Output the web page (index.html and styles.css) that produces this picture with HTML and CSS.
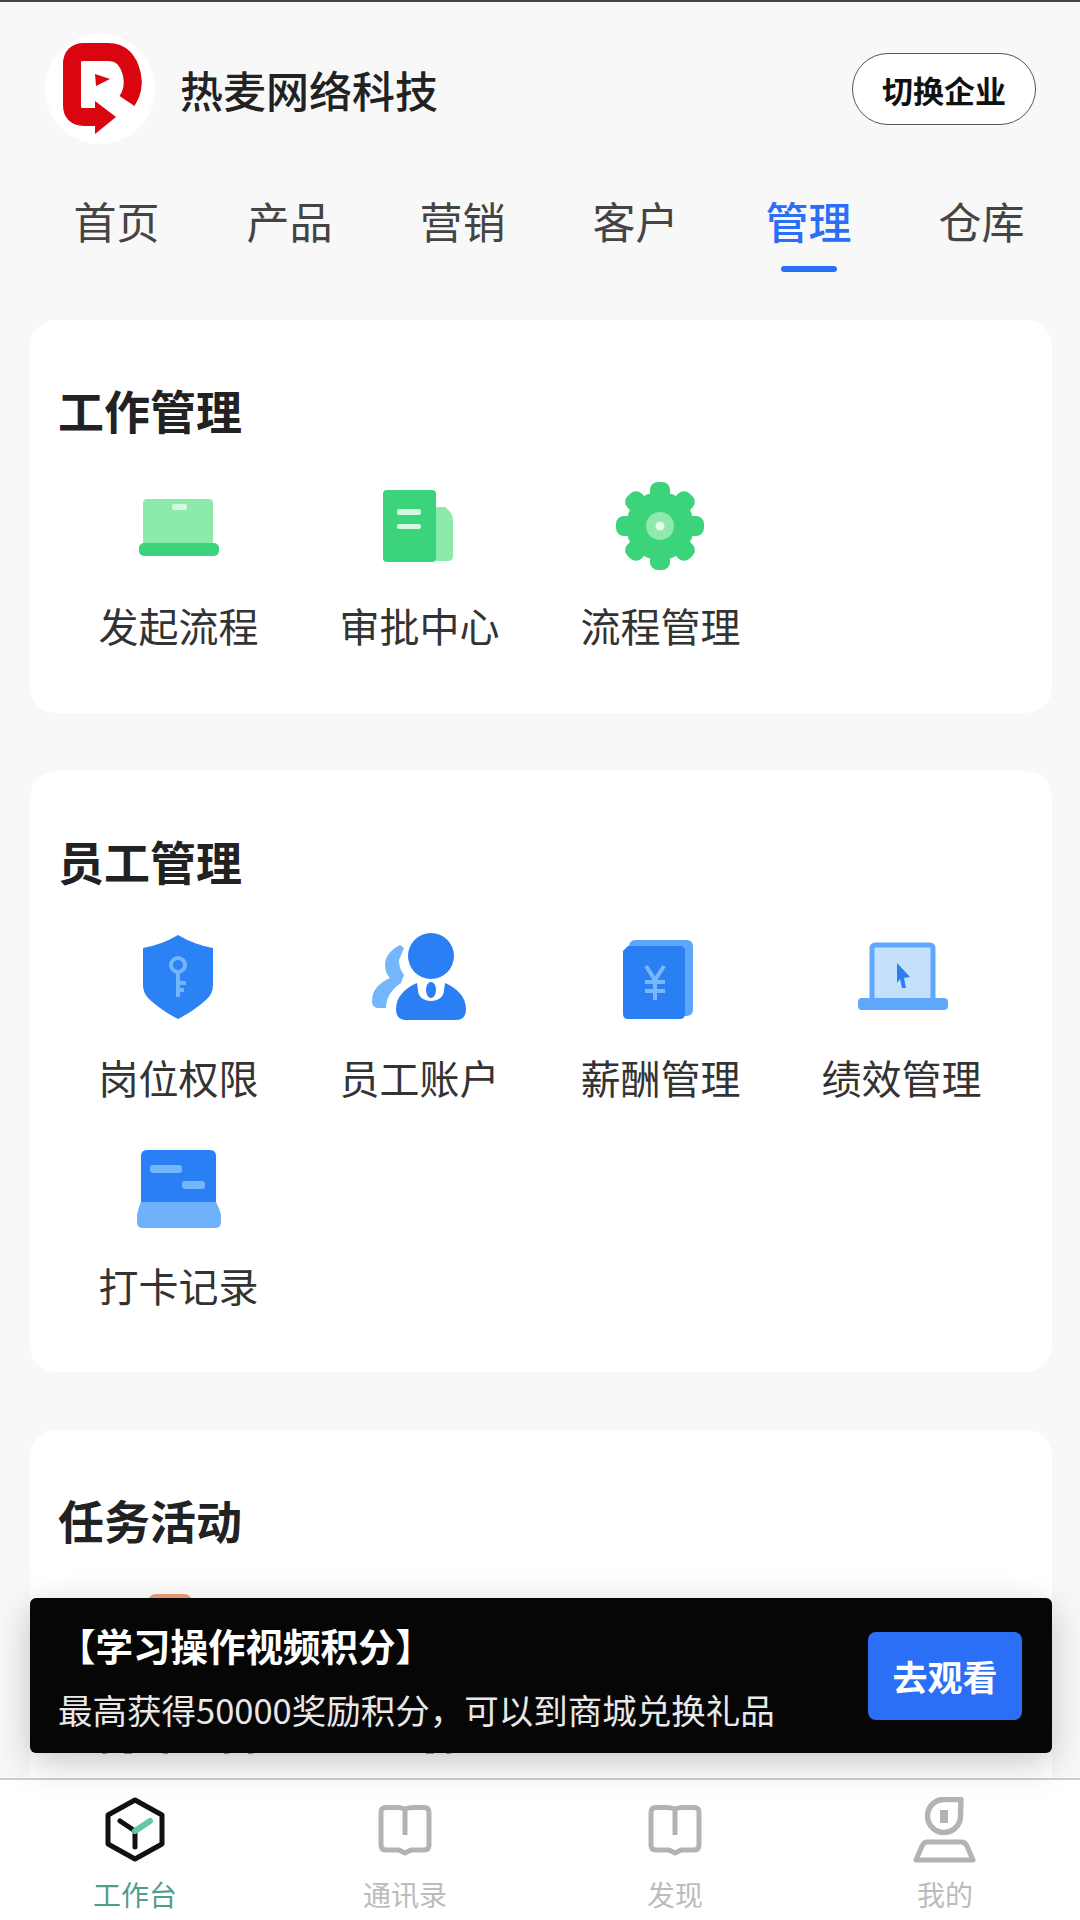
FILE: index.html
```html
<!DOCTYPE html>
<html lang="zh-CN">
<head>
  <meta charset="UTF-8" />
  <meta name="viewport" content="width=device-width, initial-scale=1.0"/>
  <title>热麦网络科技 - 管理</title>
  <link rel="stylesheet" href="styles.css">
</head>
<body>
  <header class="top-bar">
    <div class="logo">
      <svg viewBox="15 15 110 110" width="110" height="110">
        <circle cx="70" cy="70" r="55" fill="#fff"/>
        <path d="M97 82 Q105 70 102 56 Q97 33 78 33 L54 33 Q42 33 42 45 L42 86 Q42 98 54 98 L72 98" fill="none" stroke="#d9060f" stroke-width="18" stroke-linejoin="round"/>
        <polygon points="65,82 86,98 65,115" fill="#d9060f"/>
        <polygon points="65,55 80,60 66,67" fill="#d9060f"/>
      </svg>
    </div>
    <div class="company">热麦网络科技</div>
    <button class="switch-btn">切换企业</button>
  </header>

  <nav class="tabs">
    <div class="tab">首页</div>
    <div class="tab">产品</div>
    <div class="tab">营销</div>
    <div class="tab">客户</div>
    <div class="tab active">管理</div>
    <div class="tab">仓库</div>
  </nav>

  <main class="content">
    <section class="card">
      <h2>工作管理</h2>
      <div class="grid">
        <div class="item">
          <svg class="icon" viewBox="0 0 100 90">
            <rect x="14" y="19" width="70" height="46" rx="4" fill="#8ceaaa"/>
            <rect x="10" y="63" width="80" height="13" rx="5" fill="#3bd47a"/>
            <rect x="43" y="24" width="15" height="6" rx="2" fill="#d6f8e2"/>
          </svg>
          <span>发起流程</span>
        </div>
        <div class="item">
          <svg class="icon" viewBox="0 0 100 90">
            <path d="M66 27 L75 27 Q83 33 83 40 L83 76 Q83 81 78 81 L66 81 Z" fill="#8ceaaa"/>
            <rect x="13" y="10" width="53" height="72" rx="4" fill="#3bd47a"/>
            <rect x="27" y="29" width="24" height="6" rx="2" fill="#d6f8e2"/>
            <rect x="27" y="44" width="24" height="5" rx="2" fill="#d6f8e2"/>
          </svg>
          <span>审批中心</span>
        </div>
        <div class="item">
          <svg class="icon" viewBox="0 0 100 90">
            <g transform="translate(49 46)" fill="#3bd47a">
              <circle r="34"/>
              <rect x="-10" y="-44" width="20" height="24" rx="8"/>
              <rect x="-10" y="-44" width="20" height="24" rx="8" transform="rotate(45)"/>
              <rect x="-10" y="-44" width="20" height="24" rx="8" transform="rotate(90)"/>
              <rect x="-10" y="-44" width="20" height="24" rx="8" transform="rotate(135)"/>
              <rect x="-10" y="-44" width="20" height="24" rx="8" transform="rotate(180)"/>
              <rect x="-10" y="-44" width="20" height="24" rx="8" transform="rotate(225)"/>
              <rect x="-10" y="-44" width="20" height="24" rx="8" transform="rotate(270)"/>
              <rect x="-10" y="-44" width="20" height="24" rx="8" transform="rotate(315)"/>
              <circle r="14" fill="#8fe8ae"/>
              <circle r="4.5" fill="#e4fbec"/>
            </g>
          </svg>
          <span>流程管理</span>
        </div>
      </div>
    </section>

    <section class="card card-staff">
      <h2>员工管理</h2>
      <div class="grid">
        <div class="item">
          <svg class="icon" viewBox="0 0 100 90">
            <path d="M49 2 Q66 12 84 15 L84 52 Q84 60 78 66 Q65 78 49 86 Q33 78 20 66 Q14 60 14 52 L14 15 Q32 12 49 2 Z" fill="#2a82f5"/>
            <g fill="none" stroke="#74b6fb" stroke-width="4">
              <circle cx="49" cy="32" r="7"/>
              <path d="M49 39 V64 M49 50 H57 M49 57 H55"/>
            </g>
          </svg>
          <span>岗位权限</span>
        </div>
        <div class="item">
          <svg class="icon" viewBox="0 0 100 90">
            <path d="M30 12 Q15 20 15 32 Q15 40 20 45 Q2 53 2 68 Q2 75 8 75 L16 75 Q16 60 31 50 L34 42 Q29 36 29 27 L34 15 Z" fill="#74b6fb"/>
            <ellipse cx="61" cy="23" rx="23" ry="23" fill="#2a7ff5"/>
            <path d="M47 50 C35 55 26 64 26 76 C26 84 30 87 36 87 L86 87 C92 87 96 84 96 76 C96 64 87 55 75 50 L74 57 C74 64 68 68 61 68 C54 68 48 64 48 57 Z" fill="#2a7ff5"/>
            <ellipse cx="61" cy="57" rx="5" ry="8" fill="#2a7ff5"/>
          </svg>
          <span>员工账户</span>
        </div>
        <div class="item">
          <svg class="icon" viewBox="0 0 100 90">
            <rect x="18" y="7" width="64" height="76" rx="6" fill="#5ea6f9"/>
            <path d="M17 13 L69 13 Q74 13 74 18 L74 81 Q74 86 69 86 L17 86 Q12 86 12 81 L12 18 Z" fill="#2a7ff5"/>
            <path d="M35 33 L44 47 L53 33 M44 47 V67 M34 49 H54 M34 58 H54" fill="none" stroke="#7ab8fb" stroke-width="4"/>
          </svg>
          <span>薪酬管理</span>
        </div>
        <div class="item">
          <svg class="icon" viewBox="0 0 100 90">
            <rect x="20" y="12" width="61" height="56" rx="3" fill="#c5e0fd" stroke="#5fa8fb" stroke-width="5"/>
            <rect x="6" y="65" width="90" height="12" rx="4" fill="#5fa8fb"/>
            <polygon points="45,30 58,44 52,45 54,55 50,55 48,46 45,50" fill="#2a7ff5"/>
          </svg>
          <span>绩效管理</span>
        </div>
        <div class="item">
          <svg class="icon" viewBox="0 0 100 90">
            <path d="M12 61 L12 15 Q12 9 18 9 L81 9 Q87 9 87 15 L87 61 Z" fill="#2a7ff5"/>
            <path d="M12 61 L87 61 Q91 68 92 74 L92 81 Q92 87 86 87 L14 87 Q8 87 8 81 L8 74 Q9 68 12 61 Z" fill="#6db2fb"/>
            <rect x="21" y="24" width="32" height="8" rx="3" fill="#74b6fb"/>
            <rect x="53" y="40" width="23" height="8" rx="3" fill="#74b6fb"/>
          </svg>
          <span>打卡记录</span>
        </div>
      </div>
    </section>

    <section class="card">
      <h2>任务活动</h2>
      <svg class="task-peek" viewBox="0 0 420 170" width="420" height="170">
        <rect x="90" y="4" width="44" height="80" rx="8" fill="#f0a077"/>
        <g fill="#9a9a9a">
          <rect x="44" y="163" width="5" height="1"/>
          <rect x="66" y="163" width="8" height="1"/>
          <rect x="105" y="163" width="5" height="1"/>
          <rect x="166" y="163" width="5" height="1"/>
          <rect x="190" y="163" width="5" height="1"/>
          <rect x="368" y="163" width="8" height="1"/>
          <rect x="388" y="163" width="5" height="1"/>
        </g>
      </svg>
    </section>
  </main>

  <nav class="bottom-nav">
    <div class="nav-item current">
      <svg viewBox="0 0 64 66" width="64" height="66">
        <polygon points="32,3 59,18 59,47 32,62 5,47 5,18" fill="none" stroke="#111" stroke-width="5" stroke-linejoin="round"/>
        <path d="M17 24 L32 34 L32 50" fill="none" stroke="#111" stroke-width="5" stroke-linecap="round" stroke-linejoin="round"/>
        <path d="M32 34 L47 24" fill="none" stroke="#5fcaa5" stroke-width="6" stroke-linecap="round"/>
      </svg>
      <span>工作台</span>
    </div>
    <div class="nav-item">
      <svg viewBox="0 0 64 66" width="64" height="66">
        <path d="M32 12 Q28 10.5 24 10.5 H13 Q8 10.5 8 15.5 V48 Q8 53 13 53 H26 L32 56 L38 53 H51 Q56 53 56 48 V15.5 Q56 10.5 51 10.5 H40 Q36 10.5 32 12 V38" fill="none" stroke="#b3b3b3" stroke-width="5" stroke-linejoin="round"/>
      </svg>
      <span>通讯录</span>
    </div>
    <div class="nav-item">
      <svg viewBox="0 0 64 66" width="64" height="66">
        <path d="M32 12 Q28 10.5 24 10.5 H13 Q8 10.5 8 15.5 V48 Q8 53 13 53 H26 L32 56 L38 53 H51 Q56 53 56 48 V15.5 Q56 10.5 51 10.5 H40 Q36 10.5 32 12 V38" fill="none" stroke="#b3b3b3" stroke-width="5" stroke-linejoin="round"/>
      </svg>
      <span>发现</span>
    </div>
    <div class="nav-item">
      <svg viewBox="0 0 64 66" width="64" height="66">
        <path d="M48 2.5 H30 A16.5 16.5 0 1 0 47.5 19 Z" fill="none" stroke="#b3b3b3" stroke-width="5.5" stroke-linejoin="round"/>
        <rect x="27" y="13" width="8" height="13" fill="#b3b3b3"/>
        <path d="M14 45 H48 Q52 45 54 49 L60 63 H3 L9 49 Q11 45 14 45 Z" fill="none" stroke="#b3b3b3" stroke-width="5" stroke-linejoin="round"/>
      </svg>
      <span>我的</span>
    </div>
  </nav>

  <div class="promo">
    <div class="promo-text">
      <div class="promo-title">【学习操作视频积分】</div>
      <div class="promo-sub">最高获得50000奖励积分，可以到商城兑换礼品</div>
    </div>
    <button class="promo-btn">去观看</button>
  </div>
</body>
</html>
```

FILE: styles.css
```css
body {
  font-family: "Noto Sans CJK SC", "Noto Sans", sans-serif;
  margin: 0;
  padding: 0;
  width: 1080px;
  height: 1920px;
  overflow: hidden;
  position: relative;
  background-color: #f8f8f9;
  border-top: 2px solid #444;
  box-sizing: border-box;
  color: #333;
}

.top-bar {
  display: flex;
  align-items: center;
  height: 174px;
  padding: 0 44px 0 45px;
}

.logo {
  display: flex;
  width: 110px;
  height: 110px;
  margin-right: 25px;
}

.company {
  flex: 1;
  font-size: 43px;
  font-weight: 500;
  color: #222;
}

.switch-btn {
  width: 184px;
  height: 72px;
  padding: 0;
  background-color: #fff;
  border: 1.5px solid #555;
  border-radius: 36px;
  font-family: inherit;
  font-size: 31px;
  font-weight: 700;
  color: #111;
}

.tabs {
  display: grid;
  grid-template-columns: repeat(6, 173px);
  padding: 14px 0 0 30px;
  height: 80px;
}

.tab {
  display: flex;
  flex-direction: column;
  align-items: center;
  font-size: 43px;
  line-height: 60px;
  color: #444;
}

.tab.active {
  color: #2a6ff6;
  font-weight: 500;
}

.tab.active::after {
  content: "";
  width: 56px;
  height: 6px;
  margin-top: 16px;
  border-radius: 3px;
  background-color: #2a6ff6;
}

.content {
  display: flex;
  flex-direction: column;
  gap: 58px;
  padding: 50px 28px 0 30px;
}

.card {
  padding: 59px 30px 60px 28px;
  background-color: #fff;
  border-radius: 26px;
}

.card h2 {
  margin: 0 0 41px;
  font-size: 46px;
  line-height: 60px;
  font-weight: 700;
  color: #222;
}

.card-staff {
  padding-bottom: 59px;
}

.card-staff h2 {
  margin-bottom: 43px;
}

.grid {
  display: grid;
  grid-template-columns: repeat(4, 241px);
  row-gap: 36px;
}

.item {
  display: flex;
  flex-direction: column;
  align-items: center;
  font-size: 40px;
  line-height: 56px;
  color: #333;
}

.icon {
  width: 100px;
  height: 90px;
  margin-bottom: 27px;
}

.card-staff .icon {
  margin-bottom: 26px;
}

.task-peek {
  display: block;
}

.bottom-nav {
  position: absolute;
  left: 0;
  right: 0;
  top: 1776px;
  height: 142px;
  box-sizing: border-box;
  display: grid;
  grid-template-columns: repeat(4, 270px);
  padding-top: 17px;
  background-color: #fff;
  border-top: 2px solid #cfcfcf;
}

.nav-item {
  display: flex;
  flex-direction: column;
  align-items: center;
  gap: 11px;
  font-size: 28px;
  line-height: 40px;
  color: #bcbcbc;
}

.nav-item.current {
  color: #4f9d8a;
}

.promo {
  position: absolute;
  left: 30px;
  top: 1596px;
  width: 1022px;
  height: 155px;
  box-sizing: border-box;
  display: flex;
  align-items: center;
  justify-content: space-between;
  padding: 0 30px 0 28px;
  background-color: #060606;
  border-radius: 6px;
  box-shadow: 0 10px 36px rgba(0,0,0,0.22);
  color: #fff;
}

.promo-title {
  font-size: 37.5px;
  line-height: 54px;
  font-weight: 700;
}

.promo-sub {
  margin-top: 12px;
  font-size: 34.5px;
  line-height: 50px;
  color: #e8e8e8;
}

.promo-btn {
  width: 154px;
  height: 88px;
  padding: 0;
  background-color: #2a6ff6;
  border: none;
  border-radius: 8px;
  font-family: inherit;
  font-size: 35px;
  font-weight: 700;
  color: #fff;
}
```
